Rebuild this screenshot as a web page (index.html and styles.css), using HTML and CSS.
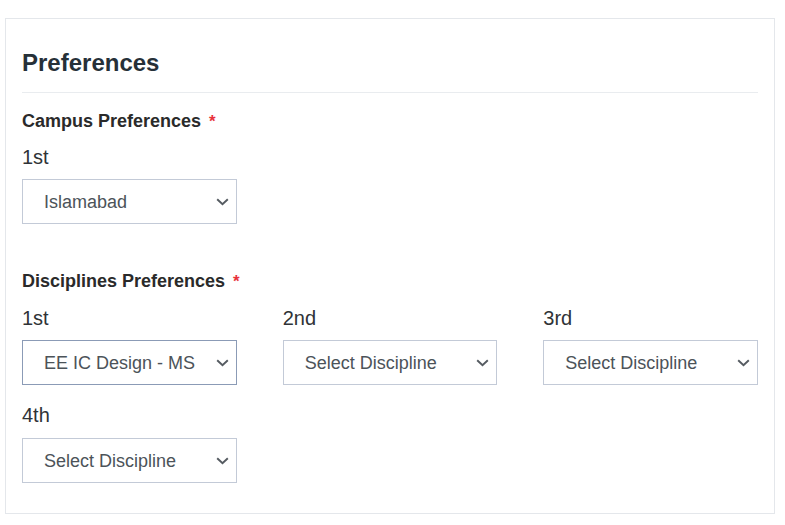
FILE: index.html
```html
<!DOCTYPE html>
<html lang="en">
<head>
<meta charset="utf-8">
<title>Preferences</title>
<link rel="stylesheet" href="styles.css">
</head>
<body>
<div class="page">
  <section class="card">
    <h2 class="card-title">Preferences</h2>

    <div class="group group-campus">
      <div class="group-label">Campus Preferences<span class="req">*</span></div>
      <div class="grid">
        <div class="field">
          <div class="field-label">1st</div>
          <div class="select">
            <span class="select-text">Islamabad</span>
            <svg class="chev" width="13" height="8" viewBox="0 0 13 8"><path d="M1.2 1.2 L6.5 6.3 L11.8 1.2" fill="none" stroke="#555b61" stroke-width="1.9"/></svg>
          </div>
        </div>
      </div>
    </div>

    <div class="group group-disc">
      <div class="group-label">Disciplines Preferences<span class="req">*</span></div>
      <div class="grid">
        <div class="field">
          <div class="field-label">1st</div>
          <div class="select select-focus">
            <span class="select-text">EE IC Design - MS</span>
            <svg class="chev" width="13" height="8" viewBox="0 0 13 8"><path d="M1.2 1.2 L6.5 6.3 L11.8 1.2" fill="none" stroke="#555b61" stroke-width="1.9"/></svg>
          </div>
        </div>
        <div class="field">
          <div class="field-label">2nd</div>
          <div class="select">
            <span class="select-text">Select Discipline</span>
            <svg class="chev" width="13" height="8" viewBox="0 0 13 8"><path d="M1.2 1.2 L6.5 6.3 L11.8 1.2" fill="none" stroke="#555b61" stroke-width="1.9"/></svg>
          </div>
        </div>
        <div class="field">
          <div class="field-label">3rd</div>
          <div class="select">
            <span class="select-text">Select Discipline</span>
            <svg class="chev" width="13" height="8" viewBox="0 0 13 8"><path d="M1.2 1.2 L6.5 6.3 L11.8 1.2" fill="none" stroke="#555b61" stroke-width="1.9"/></svg>
          </div>
        </div>
        <div class="field">
          <div class="field-label">4th</div>
          <div class="select">
            <span class="select-text">Select Discipline</span>
            <svg class="chev" width="13" height="8" viewBox="0 0 13 8"><path d="M1.2 1.2 L6.5 6.3 L11.8 1.2" fill="none" stroke="#555b61" stroke-width="1.9"/></svg>
          </div>
        </div>
      </div>
    </div>
  </section>
</div>
</body>
</html>
```

FILE: styles.css
```css
* { box-sizing: border-box; }

html, body {
  margin: 0;
  padding: 0;
  background: #ffffff;
}

body {
  font-family: "Liberation Sans", Arial, sans-serif;
  color: #2b2f33;
}

.page {
  padding: 18px 10px 0 5px;
}

.card {
  border: 1px solid #e4e7eb;
  background: #fff;
  padding: 29px 16px 30px 16px;
}

.card-title {
  margin: 0;
  font-size: 24px;
  font-weight: bold;
  line-height: 29px;
  color: #263038;
  padding-bottom: 15px;
  border-bottom: 1px solid #e9ecef;
}

.group-campus { margin-top: 17px; }
.group-disc { margin-top: 46px; }

.group-label {
  font-size: 18px;
  font-weight: bold;
  line-height: 22px;
  color: #2a2a2a;
  margin-bottom: 12px;
}

.group-disc .group-label {
  margin-bottom: 13px;
}

.req {
  color: #e8323c;
  margin-left: 8px;
  font-size: 17px;
}

.grid {
  display: grid;
  grid-template-columns: repeat(3, 1fr);
  column-gap: 46px;
  row-gap: 18px;
}

.field-label {
  font-size: 20px;
  line-height: 24px;
  color: #2f3336;
  margin-bottom: 10px;
}

.grid .field:nth-child(n+4) .field-label {
  margin-bottom: 11px;
}

.select {
  height: 45px;
  border: 1px solid #c3cad7;
  background: #fff;
  display: flex;
  align-items: center;
  justify-content: space-between;
  padding: 1px 7px 0 21px;
}

.select-focus {
  border-color: #8b9bb6;
}

.select-text {
  font-size: 18px;
  color: #4c5359;
  white-space: nowrap;
  overflow: hidden;
}

.chev {
  flex: none;
  display: block;
}
```
